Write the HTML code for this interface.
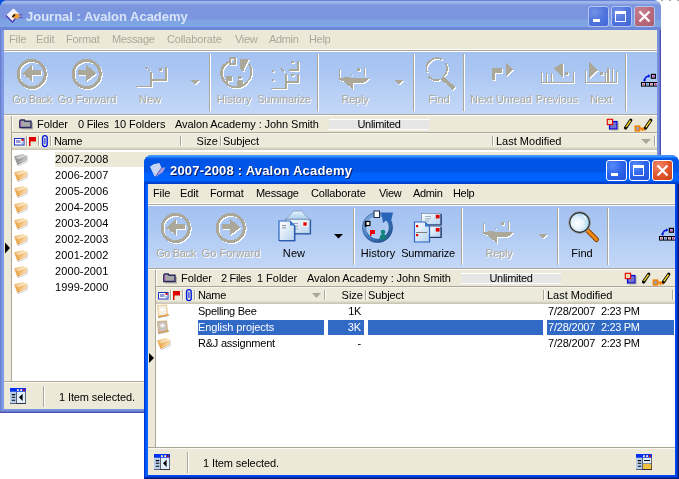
<!DOCTYPE html>
<html><head><meta charset="utf-8"><style>
html,body{margin:0;padding:0;width:679px;height:479px;overflow:hidden;background:#fff}
body>div,body>svg{position:absolute}
.t{position:absolute;white-space:nowrap;font-family:'Liberation Sans', sans-serif;will-change:transform}
</style></head><body>
<div style="left:0;top:0;width:679px;height:479px;background:#fff"></div><div style="left:0px;top:0px;width:6px;height:6px;background:#0050E0"></div><div style="left:661px;top:0px;width:2px;height:1px;background:#A8A8A8"></div><div style="left:669px;top:0px;width:2px;height:1px;background:#A8A8A8"></div><div style="left:677px;top:0px;width:2px;height:1px;background:#A8A8A8"></div><div style="left:0px;top:0px;width:661px;height:413px;background:#7B96E0;border-radius:8px 8px 0 0"></div><div style="left:0px;top:30px;width:1px;height:383px;background:#6A7ED4"></div><div style="left:660px;top:30px;width:1px;height:383px;background:#4A50B8"></div><div style="left:0px;top:412px;width:661px;height:1px;background:#4A50B8"></div><div style="left:1px;top:30px;width:1px;height:382px;background:#7890DC"></div><div style="left:659px;top:30px;width:1px;height:382px;background:#6A78CE"></div><div style="left:1px;top:411px;width:659px;height:1px;background:#6A78CE"></div><div style="left:2px;top:30px;width:1px;height:381px;background:#7E9BE3"></div><div style="left:658px;top:30px;width:1px;height:381px;background:#7890DC"></div><div style="left:2px;top:410px;width:657px;height:1px;background:#7890DC"></div><div style="left:3px;top:30px;width:1px;height:380px;background:#7E9BE3"></div><div style="left:657px;top:30px;width:1px;height:380px;background:#7A94DE"></div><div style="left:3px;top:409px;width:655px;height:1px;background:#7A94DE"></div><div style="left:0px;top:0px;width:661px;height:30px;background:linear-gradient(to bottom,#6783D8 0px,#6783D8 1px,#A0B6E8 1px,#A0B6E8 3px,#8AA2E4 4px,#7B96DF 5px,#7B96DF 19px,#7FA4E4 20px,#7FA4E4 27px,#6E88DA 27px,#6C86D8 30px);border-radius:8px 8px 0 0"></div><svg style="position:absolute;left:4px;top:6px;overflow:visible" width="22" height="22" viewBox="0 0 22 22"><path d="M2 9.5L9.5 2.5L15 8L8.5 16Z" fill="#F4F4FC"/><path d="M2 9.5L8.5 16L15 8" fill="none" stroke="#4838B0" stroke-width="1.2"/><path d="M9.5 2.5L15 8" stroke="#C8D0F0" stroke-width="0.8"/><ellipse cx="12" cy="10" rx="4" ry="2.6" fill="#E8A040"/><path d="M8.5 11L11 8.5" stroke="#000" stroke-width="1.3"/><rect x="15.5" y="8.5" width="3" height="3.2" fill="#4838A8"/><rect x="15.5" y="9.6" width="3" height="0.9" fill="#E0E0FF"/></svg><div class="t" style="left:26px;top:10px;font-size:13px;line-height:13px;font-weight:bold;color:#D8E4F8;">Journal : Avalon Academy</div><div style="left:588px;top:6px;width:21px;height:21px;background:radial-gradient(circle at 30% 25%,#7594E6 0%,#5377DE 45%,#4065D6 100%);border:1px solid #B4C6F2;box-sizing:border-box;border-radius:3px"></div><div style="left:593px;top:19px;width:7px;height:3px;background:#fff"></div><div style="left:611px;top:6px;width:21px;height:21px;background:radial-gradient(circle at 30% 25%,#7594E6 0%,#5377DE 45%,#4065D6 100%);border:1px solid #B4C6F2;box-sizing:border-box;border-radius:3px"></div><div style="left:615px;top:11px;width:11px;height:11px;border:1px solid #fff;border-top-width:3px;box-sizing:border-box"></div><div style="left:634px;top:6px;width:21px;height:21px;background:radial-gradient(circle at 30% 25%,#C98090 0%,#B96A7A 50%,#A85C6E 100%);border:1px solid #B4C6F2;box-sizing:border-box;border-radius:3px"></div><svg style="position:absolute;left:634px;top:6px;overflow:visible" width="21" height="21" viewBox="0 0 21 21"><path d="M5.5 5.5L15.5 15.5M15.5 5.5L5.5 15.5" stroke="#fff" stroke-width="2.2"/></svg><div style="left:4px;top:30px;width:653px;height:379px;background:#ECE9D8"></div><div class="t" style="left:9px;top:34px;font-size:11px;line-height:11px;font-weight:normal;color:#ACA899;letter-spacing:-0.12px;">File</div><div class="t" style="left:35.7px;top:34px;font-size:11px;line-height:11px;font-weight:normal;color:#ACA899;letter-spacing:-0.12px;">Edit</div><div class="t" style="left:66.2px;top:34px;font-size:11px;line-height:11px;font-weight:normal;color:#ACA899;letter-spacing:-0.2px;">Format</div><div class="t" style="left:112.3px;top:34px;font-size:11px;line-height:11px;font-weight:normal;color:#ACA899;letter-spacing:-0.3px;">Message</div><div class="t" style="left:166.8px;top:34px;font-size:11px;line-height:11px;font-weight:normal;color:#ACA899;letter-spacing:-0.15px;">Collaborate</div><div class="t" style="left:235px;top:34px;font-size:11px;line-height:11px;font-weight:normal;color:#ACA899;letter-spacing:-0.35px;">View</div><div class="t" style="left:268.7px;top:34px;font-size:11px;line-height:11px;font-weight:normal;color:#ACA899;letter-spacing:-0.35px;">Admin</div><div class="t" style="left:308.8px;top:34px;font-size:11px;line-height:11px;font-weight:normal;color:#ACA899;letter-spacing:-0.333px;">Help</div><div style="left:4px;top:49px;width:653px;height:1px;background:#fff"></div><div style="left:4px;top:50px;width:653px;height:1px;background:#ACA899"></div><div style="left:4px;top:51px;width:653px;height:1px;background:#fff"></div><div style="left:4px;top:52px;width:653px;height:62px;background:linear-gradient(to bottom,#A5C1F1 0%,#ABC7F2 35%,#B8D0F5 65%,#C3D7F7 100%)"></div><div style="left:4px;top:114px;width:653px;height:1px;background:#ACA899"></div><div style="left:4px;top:115px;width:653px;height:1px;background:#fff"></div><div style="left:209px;top:54px;width:1px;height:57px;background:#ACA899"></div><div style="left:210px;top:54px;width:1px;height:57px;background:#fff"></div><div style="left:317px;top:54px;width:1px;height:57px;background:#ACA899"></div><div style="left:318px;top:54px;width:1px;height:57px;background:#fff"></div><div style="left:413px;top:54px;width:1px;height:57px;background:#ACA899"></div><div style="left:414px;top:54px;width:1px;height:57px;background:#fff"></div><div style="left:463px;top:54px;width:1px;height:57px;background:#ACA899"></div><div style="left:464px;top:54px;width:1px;height:57px;background:#fff"></div><div style="left:625px;top:54px;width:1px;height:57px;background:#ACA899"></div><div style="left:626px;top:54px;width:1px;height:57px;background:#fff"></div><div style="left:11px;top:116px;width:1px;height:265px;background:#ACA899"></div><div style="left:12px;top:116px;width:1px;height:16px;background:#fff"></div><div style="left:12px;top:132px;width:645px;height:1px;background:#ACA899"></div><div style="left:12px;top:133px;width:645px;height:1px;background:#F6F4EC"></div><div style="left:12px;top:134px;width:645px;height:16px;background:linear-gradient(to bottom,#EBEADB 0px,#EBEADB 13px,#E2DECD 13px,#E2DECD 14px,#D6D2C2 14px,#D6D2C2 15px,#CBC7B8 15px,#CBC7B8 16px)"></div><div style="left:12px;top:150px;width:645px;height:231px;background:#fff"></div><div style="left:4px;top:381px;width:653px;height:1px;background:#ACA899"></div><div style="left:4px;top:382px;width:653px;height:1px;background:#FAF9F3"></div><svg style="position:absolute;left:10px;top:130px;overflow:visible" width="46" height="20" viewBox="0 0 46 20"><rect x="4.5" y="8.5" width="9.5" height="6.5" fill="#fff" stroke="#2030C0" stroke-width="1"/><rect x="6" y="10" width="4.5" height="3" fill="#9098D0"/><rect x="11.5" y="9" width="2" height="2" fill="#E00000"/><rect x="11.5" y="12" width="2" height="2" fill="#90B8F0"/><path d="M19 7H26V11.5H20.5V16H19Z" fill="#E00000"/><rect x="32.6" y="5.6" width="4.6" height="11" rx="2.3" fill="none" stroke="#0018E0" stroke-width="1.4"/><path d="M34.9 8V14" stroke="#0018E0" stroke-width="1"/></svg><div style="left:26px;top:136px;width:1px;height:10px;background:#ACA899"></div><div style="left:27px;top:136px;width:1px;height:10px;background:#fff"></div><div style="left:38px;top:136px;width:1px;height:10px;background:#ACA899"></div><div style="left:39px;top:136px;width:1px;height:10px;background:#fff"></div><div style="left:50px;top:136px;width:1px;height:10px;background:#ACA899"></div><div style="left:51px;top:136px;width:1px;height:10px;background:#fff"></div><svg style="position:absolute;left:14px;top:114px;overflow:visible" width="22" height="18" viewBox="0 0 22 18"><path d="M6.7 14.5H18V8L17 7.2H11L10.3 6H6.7L5.8 7V13.5Z" fill="#909090" opacity="0.6" transform="translate(1,1)"/><path d="M5.8 13.5H17V7.2H11L10.3 6H6.7L5.8 7Z" fill="#A8A8A8" stroke="#282860" stroke-width="1.4"/><path d="M6.8 8V12.5" stroke="#C040C0" stroke-width="0.8"/></svg><svg style="position:absolute;left:602px;top:114px;overflow:visible" width="54" height="20" viewBox="0 0 54 20"><rect x="7.5" y="7.5" width="7.5" height="7.5" fill="#7070D0" stroke="#0000E0" stroke-width="1.2"/><path d="M8.5 15.8H16V8.5" stroke="#808080" stroke-width="0.8" fill="none"/><rect x="5.3" y="5.3" width="5.3" height="5.3" fill="#F0D8B0" stroke="#E00000" stroke-width="1.1"/><path d="M23.5 14L28.8 6.2" stroke="#000" stroke-width="3.2" stroke-linecap="round"/><path d="M23.8 13.4L28.6 6.5" stroke="#F8D830" stroke-width="1.4"/><path d="M23 15L24 12.5L25 13.5Z" fill="#000"/><rect x="33.4" y="12.2" width="4.2" height="4.6" fill="#90A0C0" stroke="#F08000" stroke-width="1.6"/><path d="M37.6 14.5H44M40.5 14.5V17M42.8 14.5V16.5" stroke="#F08000" stroke-width="1.8"/><path d="M43.5 14L48.8 6.2" stroke="#000" stroke-width="3.2" stroke-linecap="round"/><path d="M43.8 13.4L48.6 6.5" stroke="#F8D830" stroke-width="1.4"/></svg><svg style="position:absolute;left:8px;top:386px;overflow:visible" width="20" height="20" viewBox="0 0 20 20"><rect x="2" y="5.5" width="16" height="12.5" fill="#303040"/><rect x="2" y="2" width="16" height="3.8" fill="#0030F0"/><rect x="9" y="3.2" width="1.8" height="1.8" fill="#F8F0D0"/><rect x="12.2" y="3.2" width="1.8" height="1.8" fill="#F8F0D0"/><rect x="15" y="3.2" width="1.8" height="1.8" fill="#F00000"/><rect x="2" y="5.8" width="6.3" height="11.5" fill="#B8D0EC"/><rect x="9" y="5.8" width="8.3" height="11.2" fill="#E0F0FC"/><path d="M3.8 8.6h3.4M3.8 11.2h3.4M3.8 14.2h3.4" stroke="#000" stroke-width="1.1"/><path d="M11 11.3L14.6 7.8V15Z" fill="#000"/></svg><div style="left:43px;top:386px;width:1px;height:21px;background:#ACA899"></div><div style="left:44px;top:386px;width:1px;height:21px;background:#fff"></div><div class="t" style="left:59px;top:392px;font-size:11px;line-height:11px;font-weight:normal;color:#000;letter-spacing:-0.107px;">1 Item selected.</div><svg style="position:absolute;left:14px;top:56px;overflow:visible" width="44" height="36" viewBox="0 0 44 36" shape-rendering="crispEdges"><g transform="translate(1,1)" fill="#fff" stroke="#fff"><circle cx="17.6" cy="18" r="13.6" fill="none" stroke-width="3"/><path d="M8.3 17.7L18 8.3V14H26.7V19.2H18V25.2Z" stroke="none"/></g><g fill="#ACA899" stroke="#ACA899"><circle cx="17.6" cy="18" r="13.6" fill="none" stroke-width="3"/><path d="M8.3 17.7L18 8.3V14H26.7V19.2H18V25.2Z" stroke="none"/></g></svg><svg style="position:absolute;left:69px;top:56px;overflow:visible" width="44" height="36" viewBox="0 0 44 36" shape-rendering="crispEdges"><g transform="translate(1,1)" fill="#fff" stroke="#fff"><circle cx="17.6" cy="18" r="13.6" fill="none" stroke-width="3"/><path d="M26.9 17.7L17.2 8.3V14H8.5V19.2H17.2V25.2Z" stroke="none"/></g><g fill="#ACA899" stroke="#ACA899"><circle cx="17.6" cy="18" r="13.6" fill="none" stroke-width="3"/><path d="M26.9 17.7L17.2 8.3V14H8.5V19.2H17.2V25.2Z" stroke="none"/></g></svg><svg style="position:absolute;left:133px;top:56px;overflow:visible" width="44" height="36" viewBox="0 0 44 36" shape-rendering="crispEdges"><g transform="translate(1,1)" fill="#fff" stroke="#fff"><path d="M2.5 30.5H18.2V16" fill="none" stroke-width="1.6"/><path d="M18 24H33V11" fill="none" stroke-width="2"/><path d="M12.5 11.2L16.8 14.5" fill="none" stroke-width="1.2"/><rect x="26.3" y="12" width="3" height="3" stroke="none"/></g><g fill="#ACA899" stroke="#ACA899"><path d="M2.5 30.5H18.2V16" fill="none" stroke-width="1.6"/><path d="M18 24H33V11" fill="none" stroke-width="2"/><path d="M12.5 11.2L16.8 14.5" fill="none" stroke-width="1.2"/><rect x="26.3" y="12" width="3" height="3" stroke="none"/></g></svg><svg style="position:absolute;left:218px;top:56px;overflow:visible" width="44" height="36" viewBox="0 0 44 36" shape-rendering="crispEdges"><g transform="translate(1,1)" fill="#fff" stroke="#fff"><path d="M10.5 5.5L4.5 11" fill="none" stroke-width="2.4"/><path d="M4.8 11A14 14 0 0 0 7 26" fill="none" stroke-width="2.5"/><path d="M6.5 25.5A14 14 0 0 0 29 26" fill="none" stroke-width="1.8"/><path d="M29 26A14 14 0 0 0 31 8" fill="none" stroke-width="1.6"/><rect x="12" y="2" width="5" height="6" fill="none" stroke-width="1.6"/><path d="M21.5 3H31L28 9L25 16L22.5 12.5Z" stroke="none"/><path d="M8.3 20H13.5V24.5H10V27H8.3Z" stroke="none"/><circle cx="21.8" cy="21.5" r="1.8" stroke="none"/><path d="M19 29.5V25.5Q19 23.8 21.8 23.8Q24.8 23.8 24.8 25.5V29.5Z" stroke="none"/></g><g fill="#ACA899" stroke="#ACA899"><path d="M10.5 5.5L4.5 11" fill="none" stroke-width="2.4"/><path d="M4.8 11A14 14 0 0 0 7 26" fill="none" stroke-width="2.5"/><path d="M6.5 25.5A14 14 0 0 0 29 26" fill="none" stroke-width="1.8"/><path d="M29 26A14 14 0 0 0 31 8" fill="none" stroke-width="1.6"/><rect x="12" y="2" width="5" height="6" fill="none" stroke-width="1.6"/><path d="M21.5 3H31L28 9L25 16L22.5 12.5Z" stroke="none"/><path d="M8.3 20H13.5V24.5H10V27H8.3Z" stroke="none"/><circle cx="21.8" cy="21.5" r="1.8" stroke="none"/><path d="M19 29.5V25.5Q19 23.8 21.8 23.8Q24.8 23.8 24.8 25.5V29.5Z" stroke="none"/></g></svg><svg style="position:absolute;left:266px;top:56px;overflow:visible" width="44" height="36" viewBox="0 0 44 36" shape-rendering="crispEdges"><g transform="translate(1,1)" fill="#fff" stroke="#fff"><path d="M23.3 13.9H31.6V4.5" fill="none" stroke-width="1.8"/><path d="M20.3 26.3H31.6V17.7" fill="none" stroke-width="1.8"/><path d="M4.5 32.3H19.9V18" fill="none" stroke-width="1.6"/><rect x="25" y="4.5" width="2.6" height="2.6" stroke="none"/><rect x="25" y="17.5" width="2.6" height="2.6" stroke="none"/><rect x="5.6" y="14.2" width="2" height="2" stroke="none"/><rect x="5.6" y="23.3" width="2" height="2" stroke="none"/><path d="M14.5 12L18.5 16.5" fill="none" stroke-width="1.2"/></g><g fill="#ACA899" stroke="#ACA899"><path d="M23.3 13.9H31.6V4.5" fill="none" stroke-width="1.8"/><path d="M20.3 26.3H31.6V17.7" fill="none" stroke-width="1.8"/><path d="M4.5 32.3H19.9V18" fill="none" stroke-width="1.6"/><rect x="25" y="4.5" width="2.6" height="2.6" stroke="none"/><rect x="25" y="17.5" width="2.6" height="2.6" stroke="none"/><rect x="5.6" y="14.2" width="2" height="2" stroke="none"/><rect x="5.6" y="23.3" width="2" height="2" stroke="none"/><path d="M14.5 12L18.5 16.5" fill="none" stroke-width="1.2"/></g></svg><svg style="position:absolute;left:336px;top:56px;overflow:visible" width="44" height="36" viewBox="0 0 44 36" shape-rendering="crispEdges"><g transform="translate(1,1)" fill="#fff" stroke="#fff"><path d="M3.6 13.2V23.5" fill="none" stroke-width="1.2"/><path d="M3.2 22.3L13.5 20.5L14 22H33.5L28.5 26.5H16.6V33L7 25L3.2 24Z" stroke="none"/><path d="M28.5 11.3V19.8" fill="none" stroke-width="1.2"/><rect x="21" y="12" width="3" height="3.3" stroke="none"/><rect x="14.8" y="17.6" width="1.3" height="1.3" stroke="none"/></g><g fill="#ACA899" stroke="#ACA899"><path d="M3.6 13.2V23.5" fill="none" stroke-width="1.2"/><path d="M3.2 22.3L13.5 20.5L14 22H33.5L28.5 26.5H16.6V33L7 25L3.2 24Z" stroke="none"/><path d="M28.5 11.3V19.8" fill="none" stroke-width="1.2"/><rect x="21" y="12" width="3" height="3.3" stroke="none"/><rect x="14.8" y="17.6" width="1.3" height="1.3" stroke="none"/></g></svg><svg style="position:absolute;left:421px;top:56px;overflow:visible" width="44" height="36" viewBox="0 0 44 36" shape-rendering="crispEdges"><g transform="translate(1,1)" fill="#fff" stroke="#fff"><path d="M6 16A10.5 10.5 0 0 1 21 3.5" fill="none" stroke-width="1.6"/><path d="M24.5 7A10.5 10.5 0 0 1 22 21" fill="none" stroke-width="1.6"/><path d="M7.5 20.5A10.5 10.5 0 0 0 19 23.3" fill="none" stroke-width="1.6"/><path d="M21 21.5L33 32.5" fill="none" stroke-width="4"/></g><g fill="#ACA899" stroke="#ACA899"><path d="M6 16A10.5 10.5 0 0 1 21 3.5" fill="none" stroke-width="1.6"/><path d="M24.5 7A10.5 10.5 0 0 1 22 21" fill="none" stroke-width="1.6"/><path d="M7.5 20.5A10.5 10.5 0 0 0 19 23.3" fill="none" stroke-width="1.6"/><path d="M21 21.5L33 32.5" fill="none" stroke-width="4"/></g></svg><svg style="position:absolute;left:486px;top:56px;overflow:visible" width="44" height="36" viewBox="0 0 44 36" shape-rendering="crispEdges"><g transform="translate(1,1)" fill="#fff" stroke="#fff"><path d="M6 12H16.3V17H8.6V24H6Z" stroke="none"/><path d="M19.5 6L27 13.5L19.5 21Z" stroke="none"/></g><g fill="#ACA899" stroke="#ACA899"><path d="M6 12H16.3V17H8.6V24H6Z" stroke="none"/><path d="M19.5 6L27 13.5L19.5 21Z" stroke="none"/></g></svg><svg style="position:absolute;left:538px;top:56px;overflow:visible" width="44" height="36" viewBox="0 0 44 36" shape-rendering="crispEdges"><g transform="translate(1,1)" fill="#fff" stroke="#fff"><path d="M3.7 16V26.6H35.6V14.9" fill="none" stroke-width="1.3"/><path d="M8.7 16.7V26M13.6 16.7V26" fill="none" stroke-width="1.1"/><path d="M16.1 12.4L24.6 6.8V21Z" stroke="none"/><rect x="27.3" y="15.5" width="3" height="3" stroke="none"/></g><g fill="#ACA899" stroke="#ACA899"><path d="M3.7 16V26.6H35.6V14.9" fill="none" stroke-width="1.3"/><path d="M8.7 16.7V26M13.6 16.7V26" fill="none" stroke-width="1.1"/><path d="M16.1 12.4L24.6 6.8V21Z" stroke="none"/><rect x="27.3" y="15.5" width="3" height="3" stroke="none"/></g></svg><svg style="position:absolute;left:576px;top:56px;overflow:visible" width="44" height="36" viewBox="0 0 44 36" shape-rendering="crispEdges"><g transform="translate(1,1)" fill="#fff" stroke="#fff"><path d="M9.6 14.2V26.3H40.5V14.9" fill="none" stroke-width="1.3"/><path d="M29.5 16V26M32 12.4V26M36.3 12.4V26" fill="none" stroke-width="1.1"/><path d="M13.4 6.2L22 14.2L13.4 21.7Z" stroke="none"/><rect x="24.3" y="15.5" width="3" height="3" stroke="none"/></g><g fill="#ACA899" stroke="#ACA899"><path d="M9.6 14.2V26.3H40.5V14.9" fill="none" stroke-width="1.3"/><path d="M29.5 16V26M32 12.4V26M36.3 12.4V26" fill="none" stroke-width="1.1"/><path d="M13.4 6.2L22 14.2L13.4 21.7Z" stroke="none"/><rect x="24.3" y="15.5" width="3" height="3" stroke="none"/></g></svg><svg style="position:absolute;left:190px;top:80px;overflow:visible" width="10" height="6" viewBox="0 0 10 6" shape-rendering="crispEdges"><g transform="translate(1,1)" fill="#fff" stroke="#fff"><path d="M0 0H9L4.5 4.5Z" stroke="none"/></g><g fill="#ACA899" stroke="#ACA899"><path d="M0 0H9L4.5 4.5Z" stroke="none"/></g></svg><svg style="position:absolute;left:394px;top:80px;overflow:visible" width="10" height="6" viewBox="0 0 10 6" shape-rendering="crispEdges"><g transform="translate(1,1)" fill="#fff" stroke="#fff"><path d="M0 0H9L4.5 4.5Z" stroke="none"/></g><g fill="#ACA899" stroke="#ACA899"><path d="M0 0H9L4.5 4.5Z" stroke="none"/></g></svg><div style="left:636px;top:66px;width:21px;height:26px;overflow:hidden"><svg width="24" height="26" style="position:absolute;left:0;top:0" viewBox="0 0 24 26"><rect x="15.4" y="8.4" width="4" height="3.8" fill="#C8B8F0" stroke="#000" stroke-width="1.2"/><circle cx="17.4" cy="10.3" r="0.9" fill="#E040C0"/><path d="M8.5 14.5Q9 10.5 13 10" stroke="#0018E0" stroke-width="1.4" fill="none"/><path d="M12 8.2L14.5 10L12 11.8Z" fill="#0018E0"/><path d="M6.8 13.5L10.2 13.5L8.5 16Z" fill="#0018E0"/><rect x="5" y="16" width="17" height="4.6" fill="#000"/><rect x="6" y="17" width="3" height="2.6" fill="#C8B8F0"/><rect x="10" y="17" width="3" height="2.6" fill="#C8B8F0"/><rect x="14" y="17" width="3" height="2.6" fill="#C8B8F0"/><rect x="18" y="17" width="3" height="2.6" fill="#C8B8F0"/><circle cx="7.5" cy="18.3" r="0.8" fill="#F06020"/><circle cx="11.5" cy="18.3" r="0.8" fill="#1090F0"/><circle cx="15.5" cy="18.3" r="0.8" fill="#E09040"/><circle cx="19.5" cy="18.3" r="0.8" fill="#E00020"/></svg></div><div class="t" style="left:-68.5px;top:94px;width:200px;text-align:center;font-size:11px;line-height:11px;color:#ACA899;letter-spacing:-0.35px;text-shadow:1px 1px 0 #fff">Go Back</div><div class="t" style="left:-13.5px;top:94px;width:200px;text-align:center;font-size:11px;line-height:11px;color:#ACA899;letter-spacing:0.078px;text-shadow:1px 1px 0 #fff">Go Forward</div><div class="t" style="left:50px;top:94px;width:200px;text-align:center;font-size:11px;line-height:11px;color:#ACA899;letter-spacing:0.1px;text-shadow:1px 1px 0 #fff">New</div><div class="t" style="left:134px;top:94px;width:200px;text-align:center;font-size:11px;line-height:11px;color:#ACA899;letter-spacing:0.017px;text-shadow:1px 1px 0 #fff">History</div><div class="t" style="left:184.3px;top:94px;width:200px;text-align:center;font-size:11px;line-height:11px;color:#ACA899;letter-spacing:-0.213px;text-shadow:1px 1px 0 #fff">Summarize</div><div class="t" style="left:254.5px;top:94px;width:200px;text-align:center;font-size:11px;line-height:11px;color:#ACA899;letter-spacing:-0.175px;text-shadow:1px 1px 0 #fff">Reply</div><div class="t" style="left:339px;top:94px;width:200px;text-align:center;font-size:11px;line-height:11px;color:#ACA899;letter-spacing:0.0px;text-shadow:1px 1px 0 #fff">Find</div><div class="t" style="left:401px;top:94px;width:200px;text-align:center;font-size:11px;line-height:11px;color:#ACA899;letter-spacing:0.02px;text-shadow:1px 1px 0 #fff">Next Unread</div><div class="t" style="left:456.70000000000005px;top:94px;width:200px;text-align:center;font-size:11px;line-height:11px;color:#ACA899;letter-spacing:-0.029px;text-shadow:1px 1px 0 #fff">Previous</div><div class="t" style="left:501px;top:94px;width:200px;text-align:center;font-size:11px;line-height:11px;color:#ACA899;letter-spacing:-0.1px;text-shadow:1px 1px 0 #fff">Next</div><div class="t" style="left:37px;top:119px;font-size:11px;line-height:11px;font-weight:normal;color:#000;letter-spacing:-0.04px;">Folder</div><div class="t" style="left:77.5px;top:119px;font-size:11px;line-height:11px;font-weight:normal;color:#000;letter-spacing:-0.25px;">0 Files</div><div class="t" style="left:113.5px;top:119px;font-size:11px;line-height:11px;font-weight:normal;color:#000;letter-spacing:-0.056px;">10 Folders</div><div class="t" style="left:175px;top:119px;font-size:11px;line-height:11px;font-weight:normal;color:#000;letter-spacing:-0.077px;">Avalon Academy : John Smith</div><div style="left:329px;top:119px;width:100px;height:11px;background:#E6E6E6;border-top:1px solid #fff;border-bottom:1px solid #fff;box-sizing:border-box"></div><div class="t" style="left:278.5px;top:119px;width:200px;text-align:center;font-size:11px;line-height:11px;color:#000;letter-spacing:-0.312px;">Unlimited</div><div class="t" style="left:53.5px;top:136px;font-size:11px;line-height:11px;font-weight:normal;color:#000;letter-spacing:-0.35px;">Name</div><div style="left:180px;top:136px;width:1px;height:10px;background:#ACA899"></div><div style="left:181px;top:136px;width:1px;height:10px;background:#fff"></div><div class="t" style="left:18px;top:136px;width:200px;text-align:right;font-size:11px;line-height:11px;color:#000;letter-spacing:0.0px;">Size</div><div style="left:220px;top:136px;width:1px;height:10px;background:#ACA899"></div><div style="left:221px;top:136px;width:1px;height:10px;background:#fff"></div><div class="t" style="left:223px;top:136px;font-size:11px;line-height:11px;font-weight:normal;color:#000;letter-spacing:-0.12px;">Subject</div><div style="left:492px;top:136px;width:1px;height:10px;background:#ACA899"></div><div style="left:493px;top:136px;width:1px;height:10px;background:#fff"></div><div class="t" style="left:495.6px;top:136px;font-size:11px;line-height:11px;font-weight:normal;color:#000;letter-spacing:0.0px;">Last Modified</div><svg style="position:absolute;left:641px;top:139px;overflow:visible" width="11" height="6" viewBox="0 0 11 6"><path d="M0 0H10L5 5Z" fill="#ACA899"/></svg><div style="left:654px;top:136px;width:1px;height:10px;background:#ACA899"></div><div style="left:655px;top:136px;width:1px;height:10px;background:#fff"></div><div style="left:55px;top:152px;width:602px;height:15px;background:#ECE9D8"></div><div class="t" style="left:55px;top:154px;font-size:11px;line-height:11px;font-weight:normal;color:#000;letter-spacing:0.1px;">2007-2008</div><svg style="position:absolute;left:10px;top:150px;overflow:visible" width="20" height="18" viewBox="0 0 20 18"><defs><linearGradient id="lfg" x1="1" y1="0" x2="0" y2="1"><stop offset="0" stop-color="#D0D0D0"/><stop offset="0.55" stop-color="#A0A0A0"/><stop offset="1" stop-color="#808080"/></linearGradient></defs><path d="M8 15.8L17 11.8L17.3 7" stroke="#A0A8C0" stroke-width="1" fill="none" opacity="0.6"/><path d="M4 6.5L9 5L13 4L15 5.5L17.5 5L16.5 10.5L7.5 15Z" fill="url(#lfg)"/><path d="M5.5 7.5L12.5 5.3L15 6.5L8.5 9Z" fill="#fff" opacity="0.45"/><path d="M8.5 12.5L15 9.5" stroke="#fff" stroke-width="0.8" opacity="0.5"/></svg><div class="t" style="left:55px;top:170px;font-size:11px;line-height:11px;font-weight:normal;color:#000;letter-spacing:0.1px;">2006-2007</div><svg style="position:absolute;left:10px;top:166px;overflow:visible" width="20" height="18" viewBox="0 0 20 18"><defs><linearGradient id="lf" x1="1" y1="0" x2="0" y2="1"><stop offset="0" stop-color="#FCE8C8"/><stop offset="0.55" stop-color="#F0B868"/><stop offset="1" stop-color="#E09030"/></linearGradient></defs><path d="M8 15.8L17 11.8L17.3 7" stroke="#A0A8C0" stroke-width="1" fill="none" opacity="0.6"/><path d="M4 6.5L9 5L13 4L15 5.5L17.5 5L16.5 10.5L7.5 15Z" fill="url(#lf)"/><path d="M5.5 7.5L12.5 5.3L15 6.5L8.5 9Z" fill="#fff" opacity="0.45"/><path d="M8.5 12.5L15 9.5" stroke="#fff" stroke-width="0.8" opacity="0.5"/></svg><div class="t" style="left:55px;top:186px;font-size:11px;line-height:11px;font-weight:normal;color:#000;letter-spacing:0.1px;">2005-2006</div><svg style="position:absolute;left:10px;top:182px;overflow:visible" width="20" height="18" viewBox="0 0 20 18"><defs><linearGradient id="lf" x1="1" y1="0" x2="0" y2="1"><stop offset="0" stop-color="#FCE8C8"/><stop offset="0.55" stop-color="#F0B868"/><stop offset="1" stop-color="#E09030"/></linearGradient></defs><path d="M8 15.8L17 11.8L17.3 7" stroke="#A0A8C0" stroke-width="1" fill="none" opacity="0.6"/><path d="M4 6.5L9 5L13 4L15 5.5L17.5 5L16.5 10.5L7.5 15Z" fill="url(#lf)"/><path d="M5.5 7.5L12.5 5.3L15 6.5L8.5 9Z" fill="#fff" opacity="0.45"/><path d="M8.5 12.5L15 9.5" stroke="#fff" stroke-width="0.8" opacity="0.5"/></svg><div class="t" style="left:55px;top:202px;font-size:11px;line-height:11px;font-weight:normal;color:#000;letter-spacing:0.1px;">2004-2005</div><svg style="position:absolute;left:10px;top:198px;overflow:visible" width="20" height="18" viewBox="0 0 20 18"><defs><linearGradient id="lf" x1="1" y1="0" x2="0" y2="1"><stop offset="0" stop-color="#FCE8C8"/><stop offset="0.55" stop-color="#F0B868"/><stop offset="1" stop-color="#E09030"/></linearGradient></defs><path d="M8 15.8L17 11.8L17.3 7" stroke="#A0A8C0" stroke-width="1" fill="none" opacity="0.6"/><path d="M4 6.5L9 5L13 4L15 5.5L17.5 5L16.5 10.5L7.5 15Z" fill="url(#lf)"/><path d="M5.5 7.5L12.5 5.3L15 6.5L8.5 9Z" fill="#fff" opacity="0.45"/><path d="M8.5 12.5L15 9.5" stroke="#fff" stroke-width="0.8" opacity="0.5"/></svg><div class="t" style="left:55px;top:218px;font-size:11px;line-height:11px;font-weight:normal;color:#000;letter-spacing:0.1px;">2003-2004</div><svg style="position:absolute;left:10px;top:214px;overflow:visible" width="20" height="18" viewBox="0 0 20 18"><defs><linearGradient id="lf" x1="1" y1="0" x2="0" y2="1"><stop offset="0" stop-color="#FCE8C8"/><stop offset="0.55" stop-color="#F0B868"/><stop offset="1" stop-color="#E09030"/></linearGradient></defs><path d="M8 15.8L17 11.8L17.3 7" stroke="#A0A8C0" stroke-width="1" fill="none" opacity="0.6"/><path d="M4 6.5L9 5L13 4L15 5.5L17.5 5L16.5 10.5L7.5 15Z" fill="url(#lf)"/><path d="M5.5 7.5L12.5 5.3L15 6.5L8.5 9Z" fill="#fff" opacity="0.45"/><path d="M8.5 12.5L15 9.5" stroke="#fff" stroke-width="0.8" opacity="0.5"/></svg><div class="t" style="left:55px;top:234px;font-size:11px;line-height:11px;font-weight:normal;color:#000;letter-spacing:0.1px;">2002-2003</div><svg style="position:absolute;left:10px;top:230px;overflow:visible" width="20" height="18" viewBox="0 0 20 18"><defs><linearGradient id="lf" x1="1" y1="0" x2="0" y2="1"><stop offset="0" stop-color="#FCE8C8"/><stop offset="0.55" stop-color="#F0B868"/><stop offset="1" stop-color="#E09030"/></linearGradient></defs><path d="M8 15.8L17 11.8L17.3 7" stroke="#A0A8C0" stroke-width="1" fill="none" opacity="0.6"/><path d="M4 6.5L9 5L13 4L15 5.5L17.5 5L16.5 10.5L7.5 15Z" fill="url(#lf)"/><path d="M5.5 7.5L12.5 5.3L15 6.5L8.5 9Z" fill="#fff" opacity="0.45"/><path d="M8.5 12.5L15 9.5" stroke="#fff" stroke-width="0.8" opacity="0.5"/></svg><div class="t" style="left:55px;top:250px;font-size:11px;line-height:11px;font-weight:normal;color:#000;letter-spacing:0.1px;">2001-2002</div><svg style="position:absolute;left:10px;top:246px;overflow:visible" width="20" height="18" viewBox="0 0 20 18"><defs><linearGradient id="lf" x1="1" y1="0" x2="0" y2="1"><stop offset="0" stop-color="#FCE8C8"/><stop offset="0.55" stop-color="#F0B868"/><stop offset="1" stop-color="#E09030"/></linearGradient></defs><path d="M8 15.8L17 11.8L17.3 7" stroke="#A0A8C0" stroke-width="1" fill="none" opacity="0.6"/><path d="M4 6.5L9 5L13 4L15 5.5L17.5 5L16.5 10.5L7.5 15Z" fill="url(#lf)"/><path d="M5.5 7.5L12.5 5.3L15 6.5L8.5 9Z" fill="#fff" opacity="0.45"/><path d="M8.5 12.5L15 9.5" stroke="#fff" stroke-width="0.8" opacity="0.5"/></svg><div class="t" style="left:55px;top:266px;font-size:11px;line-height:11px;font-weight:normal;color:#000;letter-spacing:0.1px;">2000-2001</div><svg style="position:absolute;left:10px;top:262px;overflow:visible" width="20" height="18" viewBox="0 0 20 18"><defs><linearGradient id="lf" x1="1" y1="0" x2="0" y2="1"><stop offset="0" stop-color="#FCE8C8"/><stop offset="0.55" stop-color="#F0B868"/><stop offset="1" stop-color="#E09030"/></linearGradient></defs><path d="M8 15.8L17 11.8L17.3 7" stroke="#A0A8C0" stroke-width="1" fill="none" opacity="0.6"/><path d="M4 6.5L9 5L13 4L15 5.5L17.5 5L16.5 10.5L7.5 15Z" fill="url(#lf)"/><path d="M5.5 7.5L12.5 5.3L15 6.5L8.5 9Z" fill="#fff" opacity="0.45"/><path d="M8.5 12.5L15 9.5" stroke="#fff" stroke-width="0.8" opacity="0.5"/></svg><div class="t" style="left:55px;top:282px;font-size:11px;line-height:11px;font-weight:normal;color:#000;letter-spacing:0.1px;">1999-2000</div><svg style="position:absolute;left:10px;top:278px;overflow:visible" width="20" height="18" viewBox="0 0 20 18"><defs><linearGradient id="lf" x1="1" y1="0" x2="0" y2="1"><stop offset="0" stop-color="#FCE8C8"/><stop offset="0.55" stop-color="#F0B868"/><stop offset="1" stop-color="#E09030"/></linearGradient></defs><path d="M8 15.8L17 11.8L17.3 7" stroke="#A0A8C0" stroke-width="1" fill="none" opacity="0.6"/><path d="M4 6.5L9 5L13 4L15 5.5L17.5 5L16.5 10.5L7.5 15Z" fill="url(#lf)"/><path d="M5.5 7.5L12.5 5.3L15 6.5L8.5 9Z" fill="#fff" opacity="0.45"/><path d="M8.5 12.5L15 9.5" stroke="#fff" stroke-width="0.8" opacity="0.5"/></svg><svg style="position:absolute;left:4px;top:242px;overflow:visible" width="8" height="12" viewBox="0 0 8 12"><path d="M1 0.5L6 6L1 11.5Z" fill="#000"/></svg><div style="left:144px;top:155px;width:535px;height:324px;background:#0054E3;border-radius:8px 8px 0 0"></div><div style="left:144px;top:184px;width:1px;height:295px;background:#0736D4"></div><div style="left:678px;top:184px;width:1px;height:295px;background:#001A80"></div><div style="left:144px;top:478px;width:535px;height:1px;background:#001A80"></div><div style="left:145px;top:184px;width:1px;height:294px;background:#0050EE"></div><div style="left:677px;top:184px;width:1px;height:294px;background:#0030B0"></div><div style="left:145px;top:477px;width:533px;height:1px;background:#0030B0"></div><div style="left:146px;top:184px;width:1px;height:293px;background:#0062FF"></div><div style="left:676px;top:184px;width:1px;height:293px;background:#0040E0"></div><div style="left:146px;top:476px;width:531px;height:1px;background:#0040E0"></div><div style="left:147px;top:184px;width:1px;height:292px;background:#0062FF"></div><div style="left:675px;top:184px;width:1px;height:292px;background:#0048F0"></div><div style="left:147px;top:475px;width:529px;height:1px;background:#0048F0"></div><div style="left:144px;top:155px;width:535px;height:29px;background:linear-gradient(to bottom,#3C8CFF 0px,#4A9EFF 1px,#2A83FF 2px,#0A6AF8 3px,#0055E6 4px,#0055E6 17px,#0062FC 18px,#0062FC 26px,#0044D4 27px,#003CCC 29px);border-radius:8px 8px 0 0"></div><svg style="position:absolute;left:146px;top:158px;overflow:visible" width="22" height="22" viewBox="0 0 22 22"><path d="M4 8.7L7.5 6.2L13.5 5L15.5 10L9 19.2Z" fill="#C8D4F4"/><path d="M9 19.2L15.5 10L19.5 9.2L17 14Z" fill="#A898E0"/><path d="M9 19L15.3 10.3" stroke="#201850" stroke-width="0.9" stroke-dasharray="1 1"/></svg><div class="t" style="left:170px;top:164px;font-size:13px;line-height:13px;font-weight:bold;color:#fff;text-shadow:1px 1px 0 #0A1864;letter-spacing:0.2px">2007-2008 : Avalon Academy</div><div style="left:606px;top:160px;width:21px;height:21px;background:radial-gradient(circle at 30% 25%,#5A8CF8 0%,#2F66EC 45%,#1D50D8 100%);border:1px solid #fff;box-sizing:border-box;border-radius:3px"></div><div style="left:611px;top:173px;width:7px;height:3px;background:#fff"></div><div style="left:629px;top:160px;width:21px;height:21px;background:radial-gradient(circle at 30% 25%,#5A8CF8 0%,#2F66EC 45%,#1D50D8 100%);border:1px solid #fff;box-sizing:border-box;border-radius:3px"></div><div style="left:633px;top:165px;width:11px;height:11px;border:1px solid #fff;border-top-width:3px;box-sizing:border-box"></div><div style="left:652px;top:160px;width:21px;height:21px;background:radial-gradient(circle at 30% 25%,#F0876A 0%,#E3562D 50%,#C83D14 100%);border:1px solid #fff;box-sizing:border-box;border-radius:3px"></div><svg style="position:absolute;left:652px;top:160px;overflow:visible" width="21" height="21" viewBox="0 0 21 21"><path d="M5.5 5.5L15.5 15.5M15.5 5.5L5.5 15.5" stroke="#fff" stroke-width="2.2"/></svg><div style="left:148px;top:184px;width:527px;height:291px;background:#ECE9D8"></div><div class="t" style="left:153px;top:188px;font-size:11px;line-height:11px;font-weight:normal;color:#000;letter-spacing:-0.12px;">File</div><div class="t" style="left:179.7px;top:188px;font-size:11px;line-height:11px;font-weight:normal;color:#000;letter-spacing:-0.12px;">Edit</div><div class="t" style="left:210.2px;top:188px;font-size:11px;line-height:11px;font-weight:normal;color:#000;letter-spacing:-0.2px;">Format</div><div class="t" style="left:256.3px;top:188px;font-size:11px;line-height:11px;font-weight:normal;color:#000;letter-spacing:-0.3px;">Message</div><div class="t" style="left:310.8px;top:188px;font-size:11px;line-height:11px;font-weight:normal;color:#000;letter-spacing:-0.15px;">Collaborate</div><div class="t" style="left:379px;top:188px;font-size:11px;line-height:11px;font-weight:normal;color:#000;letter-spacing:-0.35px;">View</div><div class="t" style="left:412.7px;top:188px;font-size:11px;line-height:11px;font-weight:normal;color:#000;letter-spacing:-0.35px;">Admin</div><div class="t" style="left:452.8px;top:188px;font-size:11px;line-height:11px;font-weight:normal;color:#000;letter-spacing:-0.333px;">Help</div><div style="left:148px;top:203px;width:527px;height:1px;background:#fff"></div><div style="left:148px;top:204px;width:527px;height:1px;background:#ACA899"></div><div style="left:148px;top:205px;width:527px;height:1px;background:#fff"></div><div style="left:148px;top:206px;width:527px;height:62px;background:linear-gradient(to bottom,#A5C1F1 0%,#ABC7F2 35%,#B8D0F5 65%,#C3D7F7 100%)"></div><div style="left:148px;top:268px;width:527px;height:1px;background:#ACA899"></div><div style="left:148px;top:269px;width:527px;height:1px;background:#fff"></div><div style="left:353px;top:208px;width:1px;height:57px;background:#ACA899"></div><div style="left:354px;top:208px;width:1px;height:57px;background:#fff"></div><div style="left:461px;top:208px;width:1px;height:57px;background:#ACA899"></div><div style="left:462px;top:208px;width:1px;height:57px;background:#fff"></div><div style="left:557px;top:208px;width:1px;height:57px;background:#ACA899"></div><div style="left:558px;top:208px;width:1px;height:57px;background:#fff"></div><div style="left:607px;top:208px;width:1px;height:57px;background:#ACA899"></div><div style="left:608px;top:208px;width:1px;height:57px;background:#fff"></div><div style="left:155px;top:270px;width:1px;height:177px;background:#ACA899"></div><div style="left:156px;top:270px;width:1px;height:16px;background:#fff"></div><div style="left:156px;top:286px;width:519px;height:1px;background:#ACA899"></div><div style="left:156px;top:287px;width:519px;height:1px;background:#F6F4EC"></div><div style="left:156px;top:288px;width:519px;height:16px;background:linear-gradient(to bottom,#EBEADB 0px,#EBEADB 13px,#E2DECD 13px,#E2DECD 14px,#D6D2C2 14px,#D6D2C2 15px,#CBC7B8 15px,#CBC7B8 16px)"></div><div style="left:156px;top:304px;width:519px;height:143px;background:#fff"></div><div style="left:148px;top:447px;width:527px;height:1px;background:#ACA899"></div><div style="left:148px;top:448px;width:527px;height:1px;background:#FAF9F3"></div><svg style="position:absolute;left:154px;top:284px;overflow:visible" width="46" height="20" viewBox="0 0 46 20"><rect x="4.5" y="8.5" width="9.5" height="6.5" fill="#fff" stroke="#2030C0" stroke-width="1"/><rect x="6" y="10" width="4.5" height="3" fill="#9098D0"/><rect x="11.5" y="9" width="2" height="2" fill="#E00000"/><rect x="11.5" y="12" width="2" height="2" fill="#90B8F0"/><path d="M19 7H26V11.5H20.5V16H19Z" fill="#E00000"/><rect x="32.6" y="5.6" width="4.6" height="11" rx="2.3" fill="none" stroke="#0018E0" stroke-width="1.4"/><path d="M34.9 8V14" stroke="#0018E0" stroke-width="1"/></svg><div style="left:170px;top:290px;width:1px;height:10px;background:#ACA899"></div><div style="left:171px;top:290px;width:1px;height:10px;background:#fff"></div><div style="left:182px;top:290px;width:1px;height:10px;background:#ACA899"></div><div style="left:183px;top:290px;width:1px;height:10px;background:#fff"></div><div style="left:194px;top:290px;width:1px;height:10px;background:#ACA899"></div><div style="left:195px;top:290px;width:1px;height:10px;background:#fff"></div><svg style="position:absolute;left:158px;top:268px;overflow:visible" width="22" height="18" viewBox="0 0 22 18"><path d="M6.7 14.5H18V8L17 7.2H11L10.3 6H6.7L5.8 7V13.5Z" fill="#909090" opacity="0.6" transform="translate(1,1)"/><path d="M5.8 13.5H17V7.2H11L10.3 6H6.7L5.8 7Z" fill="#A8A8A8" stroke="#282860" stroke-width="1.4"/><path d="M6.8 8V12.5" stroke="#C040C0" stroke-width="0.8"/></svg><svg style="position:absolute;left:620px;top:268px;overflow:visible" width="54" height="20" viewBox="0 0 54 20"><rect x="7.5" y="7.5" width="7.5" height="7.5" fill="#7070D0" stroke="#0000E0" stroke-width="1.2"/><path d="M8.5 15.8H16V8.5" stroke="#808080" stroke-width="0.8" fill="none"/><rect x="5.3" y="5.3" width="5.3" height="5.3" fill="#F0D8B0" stroke="#E00000" stroke-width="1.1"/><path d="M23.5 14L28.8 6.2" stroke="#000" stroke-width="3.2" stroke-linecap="round"/><path d="M23.8 13.4L28.6 6.5" stroke="#F8D830" stroke-width="1.4"/><path d="M23 15L24 12.5L25 13.5Z" fill="#000"/><rect x="33.4" y="12.2" width="4.2" height="4.6" fill="#90A0C0" stroke="#F08000" stroke-width="1.6"/><path d="M37.6 14.5H44M40.5 14.5V17M42.8 14.5V16.5" stroke="#F08000" stroke-width="1.8"/><path d="M43.5 14L48.8 6.2" stroke="#000" stroke-width="3.2" stroke-linecap="round"/><path d="M43.8 13.4L48.6 6.5" stroke="#F8D830" stroke-width="1.4"/></svg><svg style="position:absolute;left:152px;top:452px;overflow:visible" width="20" height="20" viewBox="0 0 20 20"><rect x="2" y="5.5" width="16" height="12.5" fill="#303040"/><rect x="2" y="2" width="16" height="3.8" fill="#0030F0"/><rect x="9" y="3.2" width="1.8" height="1.8" fill="#F8F0D0"/><rect x="12.2" y="3.2" width="1.8" height="1.8" fill="#F8F0D0"/><rect x="15" y="3.2" width="1.8" height="1.8" fill="#F00000"/><rect x="2" y="5.8" width="6.3" height="11.5" fill="#B8D0EC"/><rect x="9" y="5.8" width="8.3" height="11.2" fill="#E0F0FC"/><path d="M3.8 8.6h3.4M3.8 11.2h3.4M3.8 14.2h3.4" stroke="#000" stroke-width="1.1"/><path d="M11 11.3L14.6 7.8V15Z" fill="#000"/></svg><div style="left:187px;top:452px;width:1px;height:21px;background:#ACA899"></div><div style="left:188px;top:452px;width:1px;height:21px;background:#fff"></div><div class="t" style="left:203px;top:458px;font-size:11px;line-height:11px;font-weight:normal;color:#000;letter-spacing:-0.107px;">1 Item selected.</div><svg style="position:absolute;left:158px;top:210px;overflow:visible" width="44" height="36" viewBox="0 0 44 36" shape-rendering="crispEdges"><g transform="translate(1,1)" fill="#fff" stroke="#fff"><circle cx="17.6" cy="18" r="13.6" fill="none" stroke-width="3"/><path d="M8.3 17.7L18 8.3V14H26.7V19.2H18V25.2Z" stroke="none"/></g><g fill="#ACA899" stroke="#ACA899"><circle cx="17.6" cy="18" r="13.6" fill="none" stroke-width="3"/><path d="M8.3 17.7L18 8.3V14H26.7V19.2H18V25.2Z" stroke="none"/></g></svg><svg style="position:absolute;left:213px;top:210px;overflow:visible" width="44" height="36" viewBox="0 0 44 36" shape-rendering="crispEdges"><g transform="translate(1,1)" fill="#fff" stroke="#fff"><circle cx="17.6" cy="18" r="13.6" fill="none" stroke-width="3"/><path d="M26.9 17.7L17.2 8.3V14H8.5V19.2H17.2V25.2Z" stroke="none"/></g><g fill="#ACA899" stroke="#ACA899"><circle cx="17.6" cy="18" r="13.6" fill="none" stroke-width="3"/><path d="M26.9 17.7L17.2 8.3V14H8.5V19.2H17.2V25.2Z" stroke="none"/></g></svg><svg style="position:absolute;left:276px;top:208px;overflow:visible" width="38" height="36" viewBox="0 0 38 36"><defs><linearGradient id="ng1" x1="0" y1="0" x2="1" y2="1"><stop offset="0" stop-color="#fff"/><stop offset="1" stop-color="#B8D4F0"/></linearGradient><linearGradient id="ng2" x1="0" y1="0" x2="0" y2="1"><stop offset="0" stop-color="#E8F2FC"/><stop offset="1" stop-color="#A8CCEC"/></linearGradient></defs><path d="M9.8 11.3L17.5 3H25.5L33.5 11.3Z" fill="url(#ng2)" stroke="#7C98B8" stroke-width="0.8"/><rect x="9.5" y="11.3" width="24.5" height="14" fill="url(#ng1)" stroke="#6E8CB0" stroke-width="0.8"/><path d="M10 25.8H34.5V11.8" fill="none" stroke="#2858A8" stroke-width="1.2"/><rect x="26.5" y="13.5" width="5" height="5" fill="#fff"/><rect x="27.3" y="14.3" width="3.4" height="3.4" fill="#E00000"/><path d="M17 15.5h5M17 18.2h5M18 21h4" stroke="#8898A8" stroke-width="0.8"/><path d="M3 13H14L18.5 17.5V32.5H3Z" fill="url(#ng1)" stroke="#2C64C0" stroke-width="1.2"/><path d="M14 13V17.5H18.5Z" fill="#3C78D0"/><path d="M6 17.5h4M6 19.8h4" stroke="#707880" stroke-width="0.8"/><path d="M3.5 33.2H19.2V18" fill="none" stroke="#1A3C80" stroke-width="0.8" opacity="0.6"/></svg><svg style="position:absolute;left:333.5px;top:234px;overflow:visible" width="10" height="6" viewBox="0 0 10 6"><path d="M0 0H9L4.5 4.5Z" fill="#000"/></svg><svg style="position:absolute;left:360px;top:208px;overflow:visible" width="38" height="38" viewBox="0 0 38 38"><defs><linearGradient id="hg1" x1="0" y1="0" x2="1" y2="1"><stop offset="0" stop-color="#88B4E4"/><stop offset="0.5" stop-color="#4078BC"/><stop offset="1" stop-color="#20508C"/></linearGradient></defs><circle cx="17.5" cy="19.5" r="13" fill="none" stroke="url(#hg1)" stroke-width="4.2"/><circle cx="17.5" cy="19.5" r="15.1" fill="none" stroke="#24508C" stroke-width="0.8" opacity="0.8"/><circle cx="17.5" cy="19.5" r="10.9" fill="none" stroke="#D8E8F8" stroke-width="0.7" opacity="0.7"/><path d="M21.5 4.5H33L30.5 15.5L26.5 12L23 15Z" fill="#2864B8"/><rect x="14" y="3" width="5.5" height="6.5" fill="#fff" stroke="#1A2A50" stroke-width="1"/><rect x="5.3" y="13.5" width="4.6" height="4" fill="#fff" stroke="#000" stroke-width="1.2"/><rect x="5" y="13" width="1.5" height="6" fill="#000"/><rect x="10" y="22" width="5" height="4" fill="#F00000"/><rect x="10" y="22" width="1.5" height="6" fill="#F00000"/><circle cx="23" cy="24" r="2.3" fill="#12887C"/><path d="M19.5 31.5Q19.5 26 23 26Q26.5 26 26.5 31.5Z" fill="#10807A"/></svg><svg style="position:absolute;left:410px;top:208px;overflow:visible" width="38" height="38" viewBox="0 0 38 38"><defs><linearGradient id="sg1" x1="0" y1="0" x2="1" y2="1"><stop offset="0" stop-color="#fff"/><stop offset="1" stop-color="#B0D0F0"/></linearGradient></defs><rect x="11.5" y="5.5" width="19" height="11" fill="url(#sg1)" stroke="#7890B0" stroke-width="0.8"/><path d="M12 17H31.2V6" fill="none" stroke="#203868" stroke-width="1.2"/><rect x="25.8" y="6.8" width="3.8" height="3.6" fill="#E00000"/><path d="M15 8.5h6M15 10.8h6M15 13h4" stroke="#8898A8" stroke-width="0.7"/><rect x="17" y="18.5" width="13.5" height="10.5" fill="url(#sg1)" stroke="#7890B0" stroke-width="0.8"/><path d="M17.5 29.5H31.2V19" fill="none" stroke="#203868" stroke-width="1.2"/><rect x="25.8" y="20" width="3.8" height="3.6" fill="#E00000"/><path d="M4.5 14H15L19.5 18.5V34H4.5Z" fill="url(#sg1)" stroke="#2C64C0" stroke-width="1.2"/><path d="M15 14V18.5H19.5Z" fill="#3C78D0"/><rect x="6" y="17" width="2.2" height="2.2" fill="#E00000"/><rect x="6" y="26" width="2.2" height="2.2" fill="#E00000"/><path d="M6 24.5H17" stroke="#707070" stroke-width="0.9"/></svg><svg style="position:absolute;left:480px;top:210px;overflow:visible" width="44" height="36" viewBox="0 0 44 36" shape-rendering="crispEdges"><g transform="translate(1,1)" fill="#fff" stroke="#fff"><path d="M3.6 13.2V23.5" fill="none" stroke-width="1.2"/><path d="M3.2 22.3L13.5 20.5L14 22H33.5L28.5 26.5H16.6V33L7 25L3.2 24Z" stroke="none"/><path d="M28.5 11.3V19.8" fill="none" stroke-width="1.2"/><rect x="21" y="12" width="3" height="3.3" stroke="none"/><rect x="14.8" y="17.6" width="1.3" height="1.3" stroke="none"/></g><g fill="#ACA899" stroke="#ACA899"><path d="M3.6 13.2V23.5" fill="none" stroke-width="1.2"/><path d="M3.2 22.3L13.5 20.5L14 22H33.5L28.5 26.5H16.6V33L7 25L3.2 24Z" stroke="none"/><path d="M28.5 11.3V19.8" fill="none" stroke-width="1.2"/><rect x="21" y="12" width="3" height="3.3" stroke="none"/><rect x="14.8" y="17.6" width="1.3" height="1.3" stroke="none"/></g></svg><svg style="position:absolute;left:538px;top:234px;overflow:visible" width="10" height="6" viewBox="0 0 10 6" shape-rendering="crispEdges"><g transform="translate(1,1)" fill="#fff" stroke="#fff"><path d="M0 0H9L4.5 4.5Z" stroke="none"/></g><g fill="#ACA899" stroke="#ACA899"><path d="M0 0H9L4.5 4.5Z" stroke="none"/></g></svg><svg style="position:absolute;left:564px;top:206px;overflow:visible" width="38" height="38" viewBox="0 0 38 38"><defs><radialGradient id="fg1" cx="0.4" cy="0.55" r="0.6"><stop offset="0" stop-color="#fff"/><stop offset="0.5" stop-color="#E4F2FA"/><stop offset="1" stop-color="#98CCEC"/></radialGradient></defs><path d="M23 24L32.5 33.5" stroke="#8A4000" stroke-width="5" stroke-linecap="round"/><path d="M23 24L32.5 33.5" stroke="#F08A10" stroke-width="3" stroke-linecap="round"/><circle cx="15.6" cy="16.5" r="10" fill="url(#fg1)" stroke="#303030" stroke-width="1.4"/><circle cx="15.6" cy="16.5" r="11" fill="none" stroke="#A0A0A0" stroke-width="0.8"/><path d="M19 9.5Q21.5 11 22 13.5" stroke="#fff" stroke-width="1.4" fill="none"/></svg><div style="left:654px;top:220px;width:21px;height:26px;overflow:hidden"><svg width="24" height="26" style="position:absolute;left:0;top:0" viewBox="0 0 24 26"><rect x="15.4" y="8.4" width="4" height="3.8" fill="#C8B8F0" stroke="#000" stroke-width="1.2"/><circle cx="17.4" cy="10.3" r="0.9" fill="#E040C0"/><path d="M8.5 14.5Q9 10.5 13 10" stroke="#0018E0" stroke-width="1.4" fill="none"/><path d="M12 8.2L14.5 10L12 11.8Z" fill="#0018E0"/><path d="M6.8 13.5L10.2 13.5L8.5 16Z" fill="#0018E0"/><rect x="5" y="16" width="17" height="4.6" fill="#000"/><rect x="6" y="17" width="3" height="2.6" fill="#C8B8F0"/><rect x="10" y="17" width="3" height="2.6" fill="#C8B8F0"/><rect x="14" y="17" width="3" height="2.6" fill="#C8B8F0"/><rect x="18" y="17" width="3" height="2.6" fill="#C8B8F0"/><circle cx="7.5" cy="18.3" r="0.8" fill="#F06020"/><circle cx="11.5" cy="18.3" r="0.8" fill="#1090F0"/><circle cx="15.5" cy="18.3" r="0.8" fill="#E09040"/><circle cx="19.5" cy="18.3" r="0.8" fill="#E00020"/></svg></div><div class="t" style="left:75.5px;top:248px;width:200px;text-align:center;font-size:11px;line-height:11px;color:#ACA899;letter-spacing:-0.35px;text-shadow:1px 1px 0 #fff">Go Back</div><div class="t" style="left:130.5px;top:248px;width:200px;text-align:center;font-size:11px;line-height:11px;color:#ACA899;letter-spacing:0.078px;text-shadow:1px 1px 0 #fff">Go Forward</div><div class="t" style="left:193.7px;top:248px;width:200px;text-align:center;font-size:11px;line-height:11px;color:#000;letter-spacing:0.1px;">New</div><div class="t" style="left:278px;top:248px;width:200px;text-align:center;font-size:11px;line-height:11px;color:#000;letter-spacing:0.017px;">History</div><div class="t" style="left:328.3px;top:248px;width:200px;text-align:center;font-size:11px;line-height:11px;color:#000;letter-spacing:-0.213px;">Summarize</div><div class="t" style="left:398.5px;top:248px;width:200px;text-align:center;font-size:11px;line-height:11px;color:#ACA899;letter-spacing:-0.175px;text-shadow:1px 1px 0 #fff">Reply</div><div class="t" style="left:482.29999999999995px;top:248px;width:200px;text-align:center;font-size:11px;line-height:11px;color:#000;letter-spacing:0.0px;">Find</div><div class="t" style="left:180.8px;top:273px;font-size:11px;line-height:11px;font-weight:normal;color:#000;letter-spacing:-0.04px;">Folder</div><div class="t" style="left:220.6px;top:273px;font-size:11px;line-height:11px;font-weight:normal;color:#000;letter-spacing:-0.333px;">2 Files</div><div class="t" style="left:257px;top:273px;font-size:11px;line-height:11px;font-weight:normal;color:#000;letter-spacing:-0.029px;">1 Folder</div><div class="t" style="left:307px;top:273px;font-size:11px;line-height:11px;font-weight:normal;color:#000;letter-spacing:-0.077px;">Avalon Academy : John Smith</div><div style="left:460.5px;top:273px;width:100px;height:11px;background:#E6E6E6;border-top:1px solid #fff;border-bottom:1px solid #fff;box-sizing:border-box"></div><div class="t" style="left:410.5px;top:273px;width:200px;text-align:center;font-size:11px;line-height:11px;color:#000;letter-spacing:-0.312px;">Unlimited</div><div class="t" style="left:197.6px;top:290px;font-size:11px;line-height:11px;font-weight:normal;color:#000;letter-spacing:-0.35px;">Name</div><svg style="position:absolute;left:311.5px;top:293px;overflow:visible" width="10" height="6" viewBox="0 0 10 6"><path d="M0 0H9L4.5 5Z" fill="#ACA899"/></svg><div style="left:324px;top:290px;width:1px;height:10px;background:#ACA899"></div><div style="left:325px;top:290px;width:1px;height:10px;background:#fff"></div><div class="t" style="left:162.5px;top:290px;width:200px;text-align:right;font-size:11px;line-height:11px;color:#000;letter-spacing:0.0px;">Size</div><div style="left:364.5px;top:290px;width:1px;height:10px;background:#ACA899"></div><div style="left:365.5px;top:290px;width:1px;height:10px;background:#fff"></div><div class="t" style="left:368px;top:290px;font-size:11px;line-height:11px;font-weight:normal;color:#000;letter-spacing:-0.12px;">Subject</div><div style="left:543px;top:290px;width:1px;height:10px;background:#ACA899"></div><div style="left:544px;top:290px;width:1px;height:10px;background:#fff"></div><div class="t" style="left:546.5px;top:290px;font-size:11px;line-height:11px;font-weight:normal;color:#000;letter-spacing:0.0px;">Last Modified</div><div style="left:672px;top:290px;width:1px;height:10px;background:#ACA899"></div><div style="left:673px;top:290px;width:1px;height:10px;background:#fff"></div><div style="left:198px;top:320px;width:125.5px;height:15px;background:#316AC5"></div><div style="left:328px;top:320px;width:35.5px;height:15px;background:#316AC5"></div><div style="left:368px;top:320px;width:174.5px;height:15px;background:#316AC5"></div><div style="left:547px;top:320px;width:127px;height:15px;background:#316AC5"></div><div class="t" style="left:198px;top:306px;font-size:11px;line-height:11px;font-weight:normal;color:#000;letter-spacing:-0.273px;">Spelling Bee</div><div class="t" style="left:161px;top:306px;width:200px;text-align:right;font-size:11px;line-height:11px;color:#000;letter-spacing:-0.3px;">1K</div><div class="t" style="left:547.5px;top:306px;font-size:11px;line-height:11px;font-weight:normal;color:#000;letter-spacing:-0.2px;">7/28/2007</div><div class="t" style="left:600.7px;top:306px;font-size:11px;line-height:11px;font-weight:normal;color:#000;letter-spacing:-0.35px;">2:23 PM</div><div class="t" style="left:198px;top:322px;font-size:11px;line-height:11px;font-weight:normal;color:#fff;letter-spacing:-0.1px;">English projects</div><div class="t" style="left:161px;top:322px;width:200px;text-align:right;font-size:11px;line-height:11px;color:#fff;letter-spacing:-0.12px;">3K</div><div class="t" style="left:547.5px;top:322px;font-size:11px;line-height:11px;font-weight:normal;color:#fff;letter-spacing:-0.2px;">7/28/2007</div><div class="t" style="left:600.7px;top:322px;font-size:11px;line-height:11px;font-weight:normal;color:#fff;letter-spacing:-0.35px;">2:23 PM</div><div class="t" style="left:198px;top:338px;font-size:11px;line-height:11px;font-weight:normal;color:#000;letter-spacing:-0.231px;">R&amp;J assignment</div><div class="t" style="left:161px;top:338px;width:200px;text-align:right;font-size:11px;line-height:11px;color:#000;letter-spacing:-0.12px;">-</div><div class="t" style="left:547.5px;top:338px;font-size:11px;line-height:11px;font-weight:normal;color:#000;letter-spacing:-0.2px;">7/28/2007</div><div class="t" style="left:600.7px;top:338px;font-size:11px;line-height:11px;font-weight:normal;color:#000;letter-spacing:-0.35px;">2:23 PM</div><svg style="position:absolute;left:152px;top:302px;overflow:visible" width="20" height="17" viewBox="0 0 20 17"><path d="M6 15.8L16.5 13.5" stroke="#7888A0" stroke-width="1" opacity="0.7"/><path d="M5.5 3.5L14.5 3L15.5 13L6.5 14.5Z" fill="#F2EEE2" stroke="#F0C888" stroke-width="1"/><path d="M6 14.8L16.8 12.8" stroke="#E8A040" stroke-width="1.6"/><ellipse cx="10.5" cy="7.5" rx="2.5" ry="2" fill="#fff" opacity="0.7"/></svg><svg style="position:absolute;left:152px;top:318px;overflow:visible" width="20" height="17" viewBox="0 0 20 17"><path d="M6 15.8L16.5 13.5" stroke="#7888A0" stroke-width="1" opacity="0.7"/><path d="M5.5 3.5L14.5 3L15.5 13L6.5 14.5Z" fill="#C8C4BC" stroke="#D0A878" stroke-width="1"/><path d="M6 14.8L16.8 12.8" stroke="#D8A050" stroke-width="1.6"/><ellipse cx="10.5" cy="7.5" rx="2.5" ry="2" fill="#fff" opacity="0.7"/></svg><svg style="position:absolute;left:153px;top:334px;overflow:visible" width="20" height="17" viewBox="0 0 20 17"><defs><linearGradient id="lf" x1="1" y1="0" x2="0" y2="1"><stop offset="0" stop-color="#FCE8C8"/><stop offset="0.55" stop-color="#F0B868"/><stop offset="1" stop-color="#E09030"/></linearGradient></defs><path d="M8 15.8L17 11.8L17.3 7" stroke="#A0A8C0" stroke-width="1" fill="none" opacity="0.6"/><path d="M4 6.5L9 5L13 4L15 5.5L17.5 5L16.5 10.5L7.5 15Z" fill="url(#lf)"/><path d="M5.5 7.5L12.5 5.3L15 6.5L8.5 9Z" fill="#fff" opacity="0.45"/><path d="M8.5 12.5L15 9.5" stroke="#fff" stroke-width="0.8" opacity="0.5"/></svg><svg style="position:absolute;left:148px;top:352px;overflow:visible" width="8" height="12" viewBox="0 0 8 12"><path d="M1 1L6 6L1 11Z" fill="#000"/></svg><svg style="position:absolute;left:634px;top:452px;overflow:visible" width="20" height="20" viewBox="0 0 20 20"><rect x="2" y="5.5" width="16" height="12.5" fill="#303040"/><rect x="2" y="2" width="16" height="3.8" fill="#0030F0"/><rect x="9" y="3.2" width="1.8" height="1.8" fill="#F8F0D0"/><rect x="12.2" y="3.2" width="1.8" height="1.8" fill="#F8F0D0"/><rect x="15" y="3.2" width="1.8" height="1.8" fill="#F00000"/><rect x="2" y="5.8" width="6.3" height="11.5" fill="#B8D0EC"/><rect x="9" y="5.8" width="8.3" height="5.7" fill="#E0F0FC"/><rect x="9" y="12" width="8.3" height="5" fill="#F0C040"/><path d="M3.8 8.6h3.4M3.8 11.2h3.4M3.8 14.2h3.4M10 8.5h6" stroke="#000" stroke-width="1.1"/></svg>
</body></html>
